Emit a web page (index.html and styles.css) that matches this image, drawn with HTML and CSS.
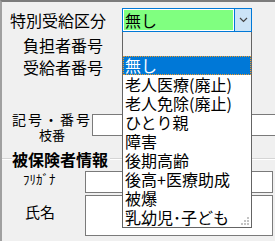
FILE: index.html
```html
<!DOCTYPE html>
<html lang="ja">
<head>
    <meta charset="UTF-8">
    <title>特別受給区分</title>
    <link rel="stylesheet" href="styles.css">
</head>
<body>
    <div class="window">
        <div class="row row-kubun">
            <div class="label-kubun">特別受給区分</div>
            <div class="combo">
                <div class="combo-field">無し</div>
                <div class="combo-btn">
                    <svg width="9" height="6" viewBox="0 0 9 6"><path d="M1 1 L4.5 4.5 L8 1" fill="none" stroke="#444" stroke-width="1.2"/></svg>
                </div>
            </div>
        </div>
        <div class="row row-futan">
            <div class="label-right">負担者番号</div>
        </div>
        <div class="row row-jukyu">
            <div class="label-right">受給者番号</div>
        </div>
        <div class="row row-kigo">
            <div class="label-kigo">
                <div class="kigo-text">
                    <div class="kigo-line1">記号・番号</div>
                    <div class="kigo-line2">枝番</div>
                </div>
            </div>
            <div class="box box-kigo"></div>
            <div class="box box-eda"></div>
        </div>
        <div class="group-head">
            <div class="group-line short"></div>
            <div class="legend">被保険者情報</div>
            <div class="group-line long"></div>
        </div>
        <div class="row row-kana">
            <div class="label-kana">ﾌﾘｶﾞﾅ</div>
            <div class="box box-kana"></div>
        </div>
        <div class="row row-name">
            <div class="label-name">氏名</div>
            <div class="box box-name"></div>
        </div>

        <!-- open dropdown of the combo, drawn over the form -->
        <div class="droplist">
            <div class="list-gap"></div>
            <div class="list-items">
                <div class="item selected">無し</div>
                <div class="item">老人医療(廃止)</div>
                <div class="item">老人免除(廃止)</div>
                <div class="item">ひとり親</div>
                <div class="item">障害</div>
                <div class="item">後期高齢</div>
                <div class="item">後高+医療助成</div>
                <div class="item">被爆</div>
                <div class="item">乳幼児･子ども</div>
            </div>
            <svg class="grip" width="9" height="9" viewBox="0 0 9 9">
                <rect x="6" y="0" width="2" height="2" fill="#c4c4c4"/>
                <rect x="3" y="3" width="2" height="2" fill="#c4c4c4"/>
                <rect x="6" y="3" width="2" height="2" fill="#c4c4c4"/>
                <rect x="0" y="6" width="2" height="2" fill="#c4c4c4"/>
                <rect x="3" y="6" width="2" height="2" fill="#c4c4c4"/>
                <rect x="6" y="6" width="2" height="2" fill="#c4c4c4"/>
            </svg>
        </div>
    </div>
</body>
</html>
```

FILE: styles.css
```css
* {
    margin: 0;
    padding: 0;
    box-sizing: border-box;
}
body {
    background: #f0f0f0;
    font-family: "Noto Sans CJK JP", "Noto Sans", sans-serif;
    color: #000;
}
.window {
    width: 275px;
    height: 241px;
    border-top: 2px solid #7c7c7c;
    border-left: 2px solid #a0a0a0;
    background: #f0f0f0;
    position: relative;
    overflow: hidden;
}
.row {
    display: flex;
    align-items: flex-start;
}
.row-kubun {
    margin-top: 6px;
    height: 24px;
    align-items: center;
}
.label-kubun {
    width: 120px;
    padding-left: 8px;
    font-size: 16px;
    line-height: 16px;
}
.combo {
    width: 130px;
    height: 24px;
    border: 1px solid #0078d7;
    display: flex;
}
.combo-field {
    flex: 1;
    border: 1px solid #fff;
    background: #80ff80;
    font-size: 16px;
    line-height: 20px;
    padding-left: 1px;
}
.combo-btn {
    width: 17px;
    border-left: 1px solid #0078d7;
    background: #cce4f7;
    display: flex;
    align-items: center;
    justify-content: center;
}
.label-right {
    width: 101px;
    text-align: right;
    font-size: 16px;
    line-height: 16px;
}
.row-futan { margin-top: 5px; }
.row-jukyu { margin-top: 6px; }
.row-kigo { margin-top: 37px; }
.label-kigo {
    width: 105px;
    padding-left: 10px;
}
.kigo-text {
    width: 80px;
    text-align: center;
}
.kigo-line1 {
    font-size: 14px;
    line-height: 15px;
    letter-spacing: 2px;
}
.kigo-line2 {
    font-size: 13px;
    line-height: 15px;
}
.box {
    background: #fff;
    border: 1px solid #7a7a7a;
    flex-shrink: 0;
}
.box-kigo {
    width: 152px;
    height: 22px;
    margin-top: 2px;
}
.box-eda {
    width: 40px;
    height: 22px;
    margin-top: 2px;
    margin-left: 2px;
}
.group-head {
    display: flex;
    align-items: center;
    height: 16px;
    margin-top: 9px;
}
.group-line {
    border-top: 1px solid #d5d5d5;
    border-bottom: 1px solid #fff;
}
.group-line.short { width: 10px; }
.group-line.long {
    flex: 1;
    margin-left: 2px;
}
.legend {
    font-size: 16px;
    line-height: 16px;
    font-weight: bold;
}
.row-kana { margin-top: 4px; }
.label-kana {
    width: 83px;
    padding-left: 21px;
    font-size: 13px;
    line-height: 13px;
    margin-top: 1px;
}
.box-kana {
    width: 188px;
    height: 22px;
}
.row-name { margin-top: 2px; }
.label-name {
    width: 83px;
    padding-left: 23px;
    margin-top: 9px;
    font-size: 15px;
    line-height: 15px;
}
.box-name {
    width: 188px;
    height: 41px;
}
.droplist {
    position: absolute;
    left: 120px;
    top: 30px;
    width: 130px;
    border: 1px solid #646464;
    border-top: none;
    background: #f0f0f0;
}
.list-gap { height: 24px; }
.list-items { background: #fff; }
.item {
    height: 19px;
    font-size: 16px;
    line-height: 19px;
    padding-left: 2px;
    white-space: nowrap;
}
.item.selected {
    background: #0078d7;
    color: #fff;
    outline: 1px dotted #f59a23;
    outline-offset: -1px;
}
.grip {
    position: absolute;
    right: 1px;
    bottom: 1px;
}
```
